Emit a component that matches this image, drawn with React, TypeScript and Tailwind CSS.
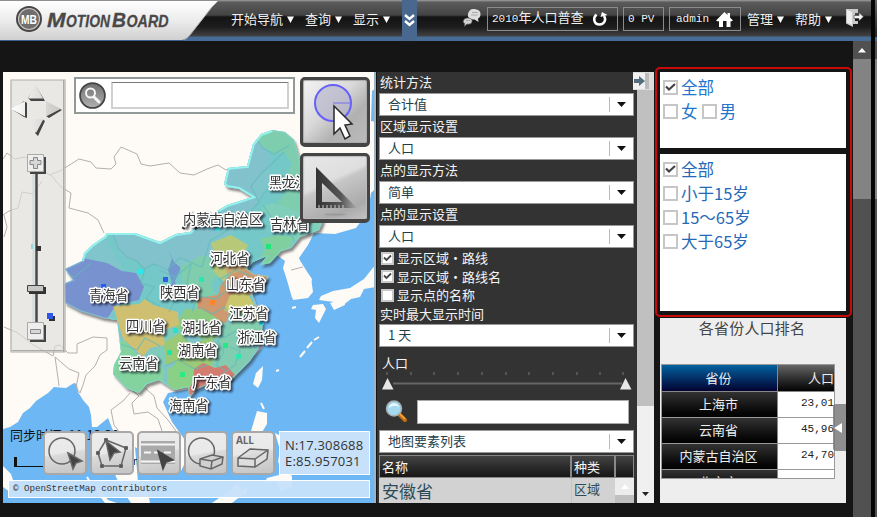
import React from "react";

const cjk = "font-['Noto_Sans_CJK_SC',sans-serif]";
const mono = "font-['Liberation_Mono','Noto_Sans_CJK_SC',monospace]";

function Logo() {
  return (
    <svg width="231" height="41" viewBox="0 0 231 41" className="shrink-0">
      <defs>
        <linearGradient id="lg" x1="0" y1="0" x2="0" y2="1">
          <stop offset="0" stopColor="#ffffff" />
          <stop offset="0.5" stopColor="#ececec" />
          <stop offset="1" stopColor="#d0d0d0" />
        </linearGradient>
      </defs>
      <path d="M0 1H218L212 7L190 35Q186 40 182 40H0Z" fill="url(#lg)" />
      <path d="M218 1L212 7L190 35Q186 40 182 40" fill="none" stroke="#aaa" strokeWidth="1" />
      <path d="M0 40.5H184" stroke="#3b608c" />
      <circle cx="29" cy="19" r="13" fill="#484545" />
      <circle cx="29" cy="19" r="10.5" fill="#716d6d" stroke="#c9c7c7" strokeWidth="1.1" />
      <text x="21" y="23.5" fontSize="12" fontWeight="700" fill="#fff" textLength="16" lengthAdjust="spacingAndGlyphs" fontFamily="Liberation Sans, sans-serif">MB</text>
      <g fill="#4a4848" stroke="#4a4848" strokeWidth="0.3" fontFamily="Liberation Sans, sans-serif" fontWeight="700" fontStyle="italic">
        <text x="47" y="26.8" fontSize="21" textLength="18.5" lengthAdjust="spacingAndGlyphs">M</text>
        <text x="66" y="26.8" fontSize="17" textLength="44" lengthAdjust="spacingAndGlyphs">OTION</text>
        <text x="112" y="26.8" fontSize="21" textLength="14" lengthAdjust="spacingAndGlyphs">B</text>
        <text x="126.500" y="26.8" fontSize="17" textLength="42" lengthAdjust="spacingAndGlyphs">OARD</text>
      </g>
    </svg>
  );
}

function Menu({ text, className }: { text: string; className: string }) {
  return (
    <div className={"flex shrink-0 items-center h-[38px] text-[13px] text-[#f0f0f0] whitespace-nowrap " + className}>
      <span>{text}</span>
      <svg width="7" height="8" className="ml-[4px] mt-[2px]"><path d="M0 0.5H7L3.5 7Z" fill="#fff" /></svg>
    </div>
  );
}

function Header() {
  return (
    <div className={"flex h-[41px] shrink-0 items-start overflow-hidden bg-[linear-gradient(180deg,#999_0px,#858585_1px,#5c5c5c_2px,#444_15px,#141414_17px,#1c1c1c_27px,#424242_36px,#476c96_37px,#476c96_41px)] " + cjk}>
      <Logo />
      <Menu text="开始导航" className="w-[74px]" />
      <Menu text="查询" className="w-[48px]" />
      <Menu text="显示" className="w-[49px]" />
      <div className="flex h-[41px] w-[15px] shrink-0 items-start justify-center bg-[#48688f]">
        <svg width="13" height="14" className="mt-[14px]"><path d="M2 1L6.5 5L11 1M2 7L6.5 11L11 7" fill="none" stroke="#fff" strokeWidth="2.4" /></svg>
      </div>
      <svg width="20" height="20" viewBox="0 0 20 20" className="ml-[45px] mt-[8px] shrink-0">
        <path d="M11 1C16 1 19 3 18.500 7C18 9 17.500 10 16 10.500L16.500 14L12.500 11.500C7 12 5.500 9 6 6C6.500 3 8.500 1 11 1Z" fill="#dedede" />
        <path d="M6 10C9 10 10.500 11.500 10 14C9.500 16 7 16.500 5 16L2.500 18.500L2.700 15.500C1 15 .8 13 2 11.500C3 10.500 4 10 6 10Z" fill="#d2d2d2" stroke="#555" strokeWidth=".7" />
        <path d="M10 4.500H16M9 7H15.500M4 12.500H8" stroke="#aaa" strokeWidth="1" />
      </svg>
      <div className={"ml-[5px] mt-[7px] flex h-[24px] w-[131px] shrink-0 items-center border border-[#8b8b8b] pl-[4px] text-[11px] text-[#f0f0f0] whitespace-nowrap " + mono}>
        <span>2010<span className="text-[13px]">年人口普查</span></span>
        <svg width="16" height="16" className="ml-[9px]"><path d="M4.500 3.500C.5 7 2 13.500 7.500 13.500C12.500 13.500 14.500 8.500 12 5" fill="none" stroke="#fff" strokeWidth="2.500" /><path d="M8.500 6L10 1L15.500 4Z" fill="#fff" /></svg>
      </div>
      <div className={"ml-[5px] mt-[7px] flex h-[24px] w-[41px] shrink-0 items-center border border-[#8b8b8b] pl-[4px] text-[11px] text-[#f0f0f0] whitespace-nowrap " + mono}>0 PV</div>
      <div className={"ml-[5px] mt-[7px] flex h-[24px] w-[72px] shrink-0 items-center border border-[#8b8b8b] pl-[6px] text-[11px] text-[#f0f0f0] " + mono}>
        admin
        <svg width="17" height="15" className="ml-[7px]"><path d="M8.500 0L11.500 3V1H14V5.500L17 8.500L15 9.500L14.500 9V15H10.500V9H7V15H3V9L2 9.500L0 8.500Z" fill="#fff" /></svg>
      </div>
      <Menu text="管理" className="ml-[6px] w-[48px]" />
      <Menu text="帮助" className="w-[50px]" />
      <svg width="18" height="18" viewBox="0 0 18 18" className="ml-px mt-[9px] shrink-0">
        <path d="M0 0H12V4H9V12H12V15H7V18L0 14.500Z" fill="#c9c9c9" /><path d="M1 1L6 3V16L1 13.500Z" fill="#eee" />
        <path d="M8 6.500H13V3.500L17.500 7.800L13 12V9.500H8Z" fill="#f3f3f3" stroke="#444" strokeWidth=".6" />
      </svg>
    </div>
  );
}

const labels: [string, number, number][] = [
  ["黑龙江省", 269, 187], ["内蒙古自治区", 183, 224], ["吉林省", 270, 229], ["河北省", 210, 263],
  ["山东省", 226, 289], ["青海省", 89, 300], ["陕西省", 160, 297], ["江苏省", 229, 318],
  ["四川省", 126, 331], ["湖北省", 182, 332], ["浙江省", 237, 342], ["湖南省", 178, 355],
  ["云南省", 119, 368], ["广东省", 192, 387], ["海南省", 169, 410],
];

const china = "M65 269L82 261L84 253L92 245L105 236L107 233L135 233L160 242L176 234L190 232L214 213L227 205L240 201L252 197L239 189L227 187L224 184L228 168L247 166L253 144L261 134L272 130L285 132L294 140L299 157L305 178L323 221L319 230L300 237L291 248L281 251L270 263L260 265L267 256L253 262L247 269L254 274L269 276L263 285L252 294L256 307L263 321L260 346L250 361L233 378L213 382L197 389L189 398L188 387L174 390L159 380L147 384L139 393L126 388L113 374L114 365L121 352L117 320L103 318L80 311L65 303L63 284L73 280Z";

const pins: [number, number, string][] = [
  [103, 286, "#285ee9"], [140, 271, "#2de8e8"], [165, 279, "#325dea"], [217, 228, "#32e8e8"],
  [268, 246, "#1de77b"], [212, 302, "#ff8430"], [261, 322, "#22d8ed"], [175, 330, "#25e4cb"],
  [169, 352, "#1ee6a9"], [182, 374, "#28eb86"], [225, 345, "#25e784"], [238, 356, "#30e7b2"], [201, 279, "#2de5b3"],
];

function MapDrawing() {
  return (
    <svg width="373" height="431" viewBox="3 72 373 431" className="block">
      <defs>
        <filter id="sh" x="-20%" y="-20%" width="140%" height="140%"><feDropShadow dx="2" dy="3" stdDeviation="1.2" floodColor="#333" floodOpacity=".55" /></filter>
        <filter id="ts" x="-10%" y="-20%" width="130%" height="160%"><feDropShadow dx="2" dy="2" stdDeviation=".8" floodColor="#112" floodOpacity=".75" /></filter>
        <clipPath id="cc"><path d={china} /></clipPath>
      </defs>
      <rect x="3" y="72" width="373" height="431" fill="#fefaf5" />
      <g fill="#6db8f4">
        <path d="M3 429L10 427L18 422L23 413L30 408L36 401L48 393L54 387L66 388L74 383L77 384L78 392L83 400L89 407L91 415L92 427L97 427L108 418L112 428L117 439L118 456L113 470L121 488L131 503H3Z" />
        <path d="M135 447L152 459L160 474L181 471L189 455L185 440L172 422L163 402L168 393L190 389L230 379L264 346L262 320L252 292L266 282L267 276L248 273L244 266L256 257L270 250L285 261L283 268L287 280L292 298L308 296L312 279L303 267L299 258L308 245L314 233L335 234L356 228L368 212L371 193L376 188V503H147L138 482Z" />
        <path d="M372 91L376 88V122L371 121Z" />
      </g>
      <path d="M285 262L301 262L311 278L313 292L308 298L293 300L291 290L287 280Z" fill="#fefaf5" />
      <path d="M312 262L306 254L301 258L303 265L316 276L314 300L330 296L340 270Z" fill="#6db8f4" />
      <g fill="#fefaf5">
        <path d="M376 264L364 279L350 288L333 291L321 296L319 300L334 302L342 306L351 299L360 297L364 289L376 287Z" />
        <path d="M313 305L323 304L326 309L319 323L315 318L316 310L311 309ZM330 303L344 299L345 305L334 310Z" />
        <path d="M263 366L256 373L253 384L258 388L262 380ZM257 411L267 413L267 424L261 434L258 433L251 431Z" />
        <path d="M275 433L283 437L291 448L291 463L286 474L278 462L280 450ZM267 478L279 475L283 469L292 476L292 487L281 491L276 481L265 482Z" />
        <path d="M212 503L229 491L237 483L242 490L248 487L245 495L237 499L232 503ZM3 466L11 474L15 486L10 492L3 487ZM96 485L108 500L117 503H105L98 494ZM121 475L132 478L148 493L150 503H141L129 490ZM171 447L178 449L179 459L171 456Z" />
      </g>
      <path d="M300 357L305 351M307 348L312 342M276 371L279 370M314 340L319 337M261 403L264 409M254 450L260 446M265 445L271 435M292 308L296 307M87 477L90 482M94 419L97 422" stroke="#fefaf5" strokeWidth="2" />
      <g fill="none" stroke="#b5b0ac" strokeWidth="1">
        <path d="M3 159L7 153L15 159L24 157L34 160L49 175L60 171L79 159L91 162L96 168L111 169L116 164L114 157L121 147L137 154L141 164L150 166L169 163L180 173L194 175L207 169L218 165L226 170L230 168M50 174L61 187L71 193L69 208L88 213L98 220L104 233M3 215L9 211L18 208L22 192L33 194L42 181M4 215L7 227L4 237" />
        <path d="M4 327L18 333L32 344L53 356L55 346L60 345L68 353H77V344L93 337L107 338L107 350L100 355L95 366L86 375L83 385L80 393L76 387L79 373L69 369L55 357L58 378L59 386M130 393L123 401L111 410L114 425L124 438M133 391L139 396L132 403L134 414L148 412L158 419L163 434L174 440M145 388L154 396L157 408L168 420L178 434" />
        <path d="M291 270L303 267" />
      </g>
      <g filter="url(#sh)"><path d={china} fill="#80c5cb" /></g>
      <g clipPath="url(#cc)">
        <path d="M100 228L140 245L165 276L202 264L222 245L254 210L270 180L268 141L320 128L326 270L260 300L180 320L110 320L130 282Z" fill="#75c8c8" />
        <path d="M112 232L116 247L124 258L137 261L145 268L155 262L167 270L180 258L202 267L216 261L210 241L220 229L241 222L259 202L251 186L261 174L271 158L255 136L215 165L200 223Z" fill="#81c2cc" />
        <path d="M254 136L261 145L274 154L284 152L292 164L286 177L286 192L277 203L286 213L309 212L325 220L321 160L279 120Z" fill="#7ecdae" />
        <path d="M272 203L261 208L271 220L286 226L294 240L325 240L323 211L300 212Z" fill="#7fcfba" />
        <path d="M255 267L265 249L260 239L277 235L294 237L281 269Z" fill="#80cf9f" />
        <path d="M60 270L83 258L107 263L122 271L136 273L144 287L139 300L116 305L107 319L80 313L60 303Z" fill="#7792cf" />
        <path d="M168 249L172 259L168 270L172 283L168 297L178 296L175 281L181 268L174 262Z" fill="#7398cf" />
        <path d="M180 267L202 255L215 260L218 275L211 284L217 299L196 307L185 293Z" fill="#80cdae" />
        <path d="M211 243L231 235L248 245L240 263L229 271L224 282L213 271L216 259Z" fill="#b8c879" />
        <path d="M224 267L236 260L246 265L247 274L230 278Z" fill="#cda96d" />
        <path d="M197 298L218 295L221 284L232 274L252 268L270 278L253 292L245 301L231 308L225 326L210 315L198 312Z" fill="#cf986e" />
        <path d="M230 295L247 292L258 312L259 326L247 330L235 318L224 310Z" fill="#c8c76c" />
        <path d="M185 309L201 309L214 316L225 324L225 335L207 341L191 334L179 338L175 327Z" fill="#8dca83" />
        <path d="M113 306L139 304L145 299L153 305L178 312L179 325L164 330L166 345L150 348L143 357L123 339L118 322Z" fill="#cebf71" />
        <path d="M111 343L124 340L134 351L143 360L157 360L164 370L163 386L139 398L108 380Z" fill="#82d39e" />
        <path d="M161 329L181 329L186 335L174 348L178 360L167 366L148 358L149 351L166 345Z" fill="#7eccb9" />
        <path d="M164 343L180 333L192 344L212 337L216 359L207 374L183 370L175 362L166 365Z" fill="#9ac977" />
        <path d="M167 370L178 362L196 370L208 374L205 391L169 392Z" fill="#8ad187" />
        <path d="M218 322L233 324L237 340L248 346L256 350L238 377L216 380L210 370L216 350Z" fill="#82cdb2" />
        <path d="M234 311L253 319L265 325L263 345L248 346L237 337L230 325Z" fill="#84cfad" />
        <path d="M194 369L203 363L215 368L226 365L235 375L226 383L205 385L194 398L187 392L193 382Z" fill="#d37c70" />
        <g fill="none" stroke="#62babb" strokeWidth="1.200" opacity=".7">
          <path d="M112 232L118 248L127 257L137 261L144 269L154 264L167 270L180 258L202 267L210 241L241 222L259 202L251 186L261 174L284 152M145 269L141 283L154 287L146 299L160 306M159 270L175 277L166 291L175 301L169 312M176 276L191 264L185 292L196 300L192 312M182 330L190 348L184 361M226 325L218 341L224 352L216 365L225 370M230 347L240 351L235 365L222 374M255 137L263 148L274 154L290 145M263 205L271 217L288 227L294 240M274 183L264 193L256 206M61 279L76 276L91 263" />
          <path d="M198 296L216 299L227 290L220 279L236 270L252 276M199 307L213 314L224 307L232 316L246 312M209 334L225 337L236 331L250 338M121 344L137 350L145 338L160 346M165 366L178 360L195 369L208 365" />
        </g>
        <path d={china} fill="none" stroke="#88d9d2" strokeWidth="2" opacity=".55" />
        <path d="M82 261L84 253L92 245L105 236L107 233L135 233L160 242L176 234L190 232L214 213L227 205L240 201L252 197L239 189L227 187L224 184L228 168L247 166L253 144L261 134L272 130" fill="none" stroke="#9afffa" strokeWidth="4" opacity=".75" />
      </g>
      <path d="M181 404L189 398L198 400L196 411L187 416L180 411Z" fill="#83cbaa" />
      {pins.map(([x, y, c]) => <rect key={x + "-" + y} x={x - 2} y={y - 2} width="5" height="5" fill={c} />)}
      <path d="M186 224l-3 5M194 225l3 4" stroke="#222" strokeWidth="3" />
      <g fontFamily="Noto Sans CJK SC, sans-serif" fontSize="13.200" fill="#333" stroke="#fff" strokeWidth="2.800" strokeLinejoin="round" paintOrder="stroke" filter="url(#ts)">
        {labels.map(([s, x, y]) => <text key={s} x={x} y={y}>{s}</text>)}
      </g>
      <g fill="#111"><text x="10" y="440" fontSize="13" fontFamily="Noto Sans CJK SC, sans-serif">同步时间: 11:13:38</text><path d="M14 457H17V466H44V467H14Z" /><text x="133" y="465" fontSize="11" fontFamily="Liberation Sans, sans-serif">m</text></g>
    </svg>
  );
}

function Tool({ children, className }: { children: React.ReactNode; className: string }) {
  return (
    <div className={"absolute top-[359px] h-[44px] w-[44px] rounded-[5px] border-2 border-[#a8a8a8] bg-[linear-gradient(170deg,#ececec_0%,#e9e9e9_48%,#dadada_52%,#c4c4c4_100%)] " + className}>
      <svg width="40" height="40" viewBox="0 0 40 40" fill="none" stroke="#666" strokeWidth="1.500">{children}</svg>
    </div>
  );
}

function MapPanel() {
  return (
    <div className="relative h-[431px] w-[373px] shrink-0 overflow-hidden">
      <MapDrawing />
      <svg className="absolute left-[7px] top-[7px]" width="57" height="276" viewBox="10 79 57 276">
        <path d="M11 80H65V352H11Z" fill="#dfdedc" fillOpacity=".65" stroke="#b0aeaa" strokeWidth="1.200" /><path d="M63.500 80V352M12 350.500H64" stroke="#aaa" strokeWidth="1" />
        <g fill="#444"><path d="M36 86L45 101H31L28 98ZM13 110L24 101L27 103V118L24 117ZM62 110L49 118L46 116L48 103ZM38 136L35 133L42 119L45 121Z" /></g>
        <defs><linearGradient id="ar"><stop stopColor="#fff" /><stop offset="1" stopColor="#c9c7c4" /></linearGradient></defs>
        <g fill="url(#ar)"><path d="M35.500 84L43 98.500H28ZM11 109L25 101V116.500ZM60.500 109L46 101V116.500ZM36 133L28 119H43.500Z" /></g>
        <path d="M33.500 172V322" stroke="#d0dddd" strokeWidth="2" /><path d="M36.500 172V322" stroke="#484848" strokeWidth="2.500" />
        <path d="M30 157H46V174H30ZM30 325H46V342H30Z" fill="#454545" />
        <path d="M27.500 154.500H43.500V171.500H27.500ZM27.500 322.500H43.500V339.500H27.500Z" fill="#eee" stroke="#aaa" />
        <path d="M33.500 157.500H37.500V160.500H41V164.500H37.500V168.500H33.500V164.500H30V160.500H33.500ZM30.500 329.500H40.500V333.500H30.500Z" fill="#d7d7d7" stroke="#888" />
        <path d="M29 287H46V294H29Z" fill="#333" /><path d="M27.500 285.500H43.500V291.500H27.500Z" fill="#c7c7c7" stroke="#444" />
        <path d="M31 244H33V249H31Z" fill="#8adbe5" /><rect x="36" y="246" width="5" height="5" fill="#333" /><rect x="49" y="316" width="6" height="5" fill="#333" /><rect x="47" y="313" width="6" height="6" fill="#3157e8" />
      </svg>
      <div className="absolute left-[71px] top-[5px] flex h-[37px] w-[221px] items-center border-2 border-[#929a99] bg-white pl-[3px]">
        <svg width="27" height="27" viewBox="0 0 27 27"><defs><linearGradient id="mg" x1="0" y1="0" x2="0" y2="1"><stop stopColor="#707070" /><stop offset="1" stopColor="#b0b0b0" /></linearGradient></defs><circle cx="13.500" cy="13.500" r="12.400" fill="url(#mg)" stroke="#444" strokeWidth="1.800" /><circle cx="11.500" cy="11" r="4.500" fill="none" stroke="#f5f5f5" strokeWidth="2" /><path d="M15 15L20 20" stroke="#f5f5f5" strokeWidth="3" strokeLinecap="round" /></svg>
        <div className="ml-[5px] h-[27px] w-[178px] border-2 border-[#d0d0d0] border-t-[#777] border-t bg-white" />
      </div>
      <div className="absolute left-[297px] top-[5px] h-[70px] w-[70px] rounded-[5px] border-[3px] border-b-[4px] border-[#454545] bg-[linear-gradient(135deg,#f4f4f4_0%,#d9d9d9_42%,#b1b1b1_68%,#bbb_100%)] shadow-[inset_0_0_1px_1px_#aaa]">
        <svg width="63" height="63" viewBox="0 0 63 63"><circle cx="30" cy="23" r="18" fill="#b5b3c9" fillOpacity=".65" stroke="#6660fa" strokeWidth="2" /><path d="M30 23H48" stroke="#7771ed" /><path d="M31 26L49 44L42 45L47 56L42 59L37 48L31 54Z" fill="#fff" stroke="#292929" strokeWidth="1.500" /></svg>
      </div>
      <div className="absolute left-[297px] top-[81px] h-[70px] w-[70px] rounded-[5px] border-[3px] border-b-[4px] border-[#454545] bg-[linear-gradient(155deg,#e8e8e8_0%,#dedede_40%,#c6c6c6_46%,#aaa_80%,#c4c4c4_100%)] shadow-[inset_0_0_1px_1px_#bbb]">
        <svg width="63" height="63" viewBox="0 0 63 63"><defs><linearGradient id="tri"><stop stopColor="#333" /><stop offset=".6" stopColor="#555" /><stop offset="1" stopColor="#aaa" /></linearGradient></defs><path fillRule="evenodd" d="M13 11L54 52H13ZM19 27V46H39Z" fill="url(#tri)" /><path d="M16 52V49M20 52V49M24 52V49M28 52V49M32 52V49M36 52V49M40 52V49" stroke="#ccc" /><ellipse cx="32" cy="58.500" rx="11" ry=".9" fill="#999" /></svg>
      </div>
      <Tool className="left-[40px]"><circle cx="17" cy="18" r="13" /><path d="M23 20L37 28L31 30L28 36Z" fill="#444" /></Tool>
      <Tool className="left-[87px]"><path d="M14 7L34 15L29 33H10L6 20Z" /><path d="M12.500 5.500H15.500V8.500H12.500ZM32.500 13.500H35.500V16.500H32.500ZM27.500 31.500H30.500V34.500H27.500ZM8.500 31.500H11.500V34.500H8.500ZM4.500 18.500H7.500V21.500H4.500Z" fill="#555" strokeWidth="1" /><path d="M14 8L28 19L22 20L18 27Z" fill="#444" /></Tool>
      <Tool className="left-[134px]"><path d="M2 8H36V31H2Z" fill="#aaa" stroke="none" /><path d="M2 11.500H36M2 28.500H36" stroke="#f6f6f6" strokeWidth="2" /><path d="M5 19.500H35" stroke="#f6f6f6" strokeWidth="2" strokeDasharray="7 3" /><path d="M19 18L34 27L27 29L24 36Z" fill="#444" stroke="#444" /></Tool>
      <Tool className="left-[181px]"><circle cx="15.500" cy="18" r="13" /><path d="M14 26L26 22L37 24L36 31L25 36L14 33Z" fill="#d0d0d0" /><path d="M14 26L26 28L37 24M26 28L25 36" /></Tool>
      <Tool className="left-[228px]"><text x="3" y="10.500" fill="#666" stroke="none" fontFamily="Open Sans, sans-serif" fontSize="10" fontWeight="700" textLength="18">ALL</text><path d="M5 25L17 16L35 17L34 26L22 34L5 33ZM5 25L22 26L35 17M22 26V34" fill="#dedede" /></Tool>
      <div className="absolute left-[276px] top-[359px] flex h-[44px] w-[91px] flex-col justify-center border border-white bg-[#c8e1fa] pl-[5px] font-['Open_Sans',sans-serif] text-[13px] leading-[16px] text-[#333] tracking-[.2px]"><div>N:17.308688</div><div>E:85.957031</div></div>
      <div className="absolute left-[5px] top-[408px] h-[18px] w-[362px] border border-white bg-[#c8e1fa]/95 pl-[4px] font-['Liberation_Mono',monospace] text-[9.2px] leading-[16px] text-[#333] whitespace-nowrap">© OpenStreetMap contributors</div>
      <div className="absolute right-0 top-0 h-full w-[2px] bg-[#9bb4c6]" />
    </div>
  );
}

function Select({ text }: { text: string }) {
  return (
    <div className={"mx-[2px] flex h-[23px] w-[255px] shrink-0 items-center border border-[#999] bg-white pl-[8px] text-[13px] leading-[20px] text-[#233e49] " + cjk}>
      <span className="grow pb-[2px]">{text}</span>
      <span className="h-[15px] w-px bg-[#bbb]" />
      <svg width="9" height="5" className="ml-[7px] mr-[7px]"><path d="M0 0H9L4.500 5Z" fill="#111" /></svg>
    </div>
  );
}

function Label({ text }: { text: string }) {
  return <div className="flex h-[21px] shrink-0 items-center pb-px pl-[3px]">{text}</div>;
}

function Check({ on, text }: { on?: boolean; text: string }) {
  return (
    <div className="flex h-[18.600px] shrink-0 items-center pl-[4px]">
      <svg width="13" height="13" viewBox="0 0 13 13"><path d="M1 1H12V12H1Z" fill="#fff" stroke="#c8c8c8" strokeWidth="2" />{on && <path d="M3 5.500L5.500 8L10 3.500" fill="none" stroke="#444" strokeWidth="1.800" />}</svg>
      <span className="ml-[3px]">{text}</span>
    </div>
  );
}

function SettingsPanel() {
  return (
    <div className="ml-px flex h-[431px] w-[277px] shrink-0">
      <div className={"flex w-[260px] shrink-0 flex-col overflow-hidden bg-[#333] text-[13px] leading-[18px] text-[#f5f5f5] " + cjk}>
        <Label text="统计方法" /><Select text="合计值" />
        <Label text="区域显示设置" /><Select text="人口" />
        <Label text="点的显示方法" /><Select text="简单" />
        <Label text="点的显示设置" /><Select text="人口" />
        <div className="mt-px h-[75px] shrink-0">
          <Check on text="显示区域・路线" /><Check on text="显示区域・路线名" /><Check text="显示点的名称" />
          <div className="pl-[3px] leading-[18px]">实时最大显示时间</div>
        </div>
        <Select text="1 天" />
        <div className="h-[52px] shrink-0 pt-[7px]">
          <div className="pl-[5px]">人口</div>
          <svg width="260" height="20" viewBox="0 0 260 20" className="block">
            {[10, 34, 57, 81, 105, 129, 152, 176, 200, 223, 246].map((x) => <path key={x} d={"M" + x + " 0V3"} stroke="#777" />)}
            <path d="M16 11.500H245" stroke="#666" strokeWidth="2" /><path d="M10.500 6L16.500 17.500H5ZM248.500 6L254.500 17.500H243Z" fill="#e7e7e7" />
          </svg>
        </div>
        <div className="flex h-[31px] shrink-0 items-start">
          <svg width="22" height="24" viewBox="0 0 22 24" className="ml-[8px] mt-px"><path d="M14 14L20 20" stroke="#c07012" strokeWidth="4" strokeLinecap="round" /><path d="M15 14L20 19" stroke="#ffaa3d" strokeWidth="1.500" /><circle cx="9" cy="8.500" r="7.500" fill="#a4daef" stroke="#a5afb4" strokeWidth="1.500" /><path d="M4 8C4 3 12 1 14 7Q9 4 4 8" fill="#edf8fc" /></svg>
          <div className="ml-[10px] mt-px h-[24px] w-[212px] border border-[#aaa] bg-white" />
        </div>
        <Select text="地图要素列表" />
        <div className="mx-[2px] mt-[2px] grid w-[255px] shrink-0 grid-cols-[192px_44px_19px] grid-rows-[23px_26px] text-[13px]">
          <div className="border border-[#888] bg-linear-to-b from-[#444] to-[#161616] pl-[2px] leading-[21px]">名称</div>
          <div className="border border-[#888] bg-linear-to-b from-[#444] to-[#161616] pl-[2px] leading-[21px]">种类</div>
          <div className="border border-[#888] bg-linear-to-b from-[#444] to-[#161616]" />
          <div className="bg-[#d2d2d2] pl-[3px] text-[17px] leading-[25px] text-[#2c4b57]">安徽省</div>
          <div className="border-l border-[#c4c4c4] bg-[#d2d2d2] pl-[2px] leading-[22px] text-[#2c4b57]">区域</div>
          <div className="bg-[#c0c0c0]"><div className="flex h-[17px] items-center justify-center bg-[#ececec]"><svg width="8" height="5"><path d="M0 5L4 0L8 5Z" fill="#fff" /></svg></div></div>
        </div>
      </div>
      <div className="flex w-[17px] shrink-0 flex-col bg-[#f0f0f0]">
        <div className="-ml-[4px] h-[18px] w-[21px] shrink-0 bg-[#ddd]"><svg width="21" height="18"><path d="M0 1H16V17H0Z" fill="#f0f0f0" /><path d="M12 1H16V17H12Z" fill="#bbb" /><path d="M1 7H6V4L12 9L6 14V11H1Z" fill="#536f7b" /></svg></div>
        <div className="h-[316px] shrink-0 bg-[#c0c0c0]" />
        <svg width="17" height="97" className="shrink-0"><path d="M5 86H12L8.500 90Z" fill="#222" /></svg>
      </div>
    </div>
  );
}

function FilterCheck({ on, text }: { on?: boolean; text: string }) {
  return (
    <div className="flex h-[24px] items-center">
      <svg width="15" height="15" viewBox="0 0 15 15" className="shrink-0"><path d="M1 1H14V14H1Z" fill="#fff" stroke="#c6c6c6" strokeWidth="2" />{on && <path d="M3 6.500L6 9.500L12 4" fill="none" stroke="#444" strokeWidth="2.200" />}</svg>
      <span className="ml-[3px] whitespace-nowrap leading-[22px]">{text}</span>
    </div>
  );
}

function RankingTable() {
  const rows: [string, string][] = [["上海市", "23,01"], ["云南省", "45,96"], ["内蒙古自治区", "24,70"], ["北京市", ""]];
  return (
    <div className={"relative mt-[7px] h-[185px] bg-[#eee] pl-px text-[13px] " + cjk}>
      <div className="h-[46px] pr-[3px] text-center text-[15px] leading-[20px] text-[#444] tracking-[.2px]">各省份人口排名</div>
      <div className="h-[115px] w-[174px] overflow-hidden border border-[#999]">
        <div className="flex h-[27px] border-b border-[#888] text-[#eee] leading-[26px]">
          <div className="w-[116px] border-r border-[#888] bg-linear-to-b from-[#0362a0] to-[#030332] pr-[2px] text-center">省份</div>
          <div className="grow bg-linear-to-b from-[#666] to-[#050505] text-right">人口</div>
        </div>
        {rows.map(([p, v]) => (
          <div key={p} className="flex h-[26px] border-b border-[#999] leading-[23px]">
            <div className="w-[116px] border-r border-[#888] bg-linear-to-b from-[#333] to-[#020202] pr-[2px] text-center text-[#eee]">{p}</div>
            <div className={"grow bg-white text-right text-[11px] text-[#222] " + mono}>{v}</div>
          </div>
        ))}
      </div>
      <div className="absolute right-0 top-[86px] flex h-[47px] w-[13px] items-center rounded-l-[3px] bg-[#777]/80"><svg width="9" height="10" className="ml-px"><path d="M0 5L8 0V10Z" fill="#fff" /></svg></div>
    </div>
  );
}

export default function App() {
  return (
    <div className="flex h-[517px] w-[877px] overflow-hidden bg-[#151515]">
      <div className="flex w-[871px] shrink-0 flex-col">
        <Header />
        <div className="flex h-[476px] shrink-0">
          <div className="flex w-[853px] shrink-0 items-start pl-[3px] pt-[31px]">
            <MapPanel />
            <SettingsPanel />
            <div className="relative ml-[6px] w-[186px] shrink-0">
              <div className={"h-[76px] bg-white pl-[3px] pt-[3px] text-[16.5px] text-[#2175cc] " + cjk}>
                <FilterCheck on text="全部" />
                <div className="flex gap-[4px]"><FilterCheck text="女" /><FilterCheck text="男" /></div>
              </div>
              <div className={"mt-[6px] h-[157px] bg-white pl-[3px] pt-[3px] text-[16.5px] text-[#2669b5] " + cjk}>
                <FilterCheck on text="全部" /><FilterCheck text="小于15岁" /><FilterCheck text="15～65岁" /><FilterCheck text="大于65岁" />
              </div>
              <RankingTable />
              <div className="absolute -left-[5px] -top-[5px] h-[250px] w-[197px] rounded-[5px] border-2 border-[#ca0909]" />
            </div>
          </div>
          <div className="flex w-[18px] shrink-0 flex-col bg-[#515151]">
            <div className="flex h-[18px] shrink-0 items-center justify-center"><svg width="8" height="5"><path d="M0 4.500L4 0L8 4.500Z" fill="#fff" /></svg></div>
            <div className="h-[140px] shrink-0 bg-[#838383]" />
          </div>
        </div>
      </div>
      <div className="w-[4px] shrink-0 bg-[#050505]" />
      <div className="flex w-[2px] shrink-0 flex-col">
        <div className="h-[37px] bg-linear-to-b from-[#666] to-[#222]" /><div className="h-[4px] bg-[#476c96]" /><div className="h-[18px] bg-[#515151]" /><div className="h-[140px] bg-[#838383]" /><div className="grow bg-[#515151]" />
      </div>
    </div>
  );
}
